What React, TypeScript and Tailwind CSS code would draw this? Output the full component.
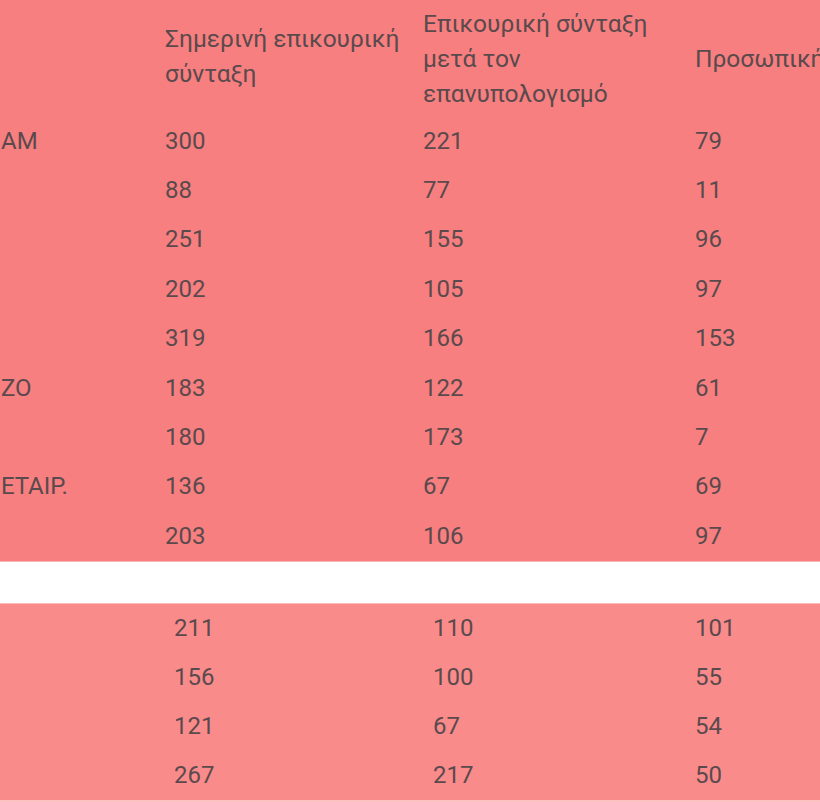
import React from "react";

const topRows = [
  ["ΑΜ", "300", "221", "79"],
  ["", "88", "77", "11"],
  ["", "251", "155", "96"],
  ["", "202", "105", "97"],
  ["", "319", "166", "153"],
  ["ΖΟ", "183", "122", "61"],
  ["", "180", "173", "7"],
  ["ΕΤΑΙΡ.", "136", "67", "69"],
  ["", "203", "106", "97"],
];

const bottomRows = [
  ["", "211", "110", "101"],
  ["", "156", "100", "55"],
  ["", "121", "67", "54"],
  ["", "267", "217", "50"],
];

function App() {
  return (
    <div
      className="w-[820px] h-[802px] overflow-hidden bg-white text-[#5a4a4d]"
      style={{ fontFamily: "Roboto, 'Noto Sans', sans-serif" }}
    >
      <div className="bg-[#f77f7f] border-b border-[#fbb4b4]">
        <div className="grid grid-cols-[165px_258px_272px_1fr] h-[116px] items-center text-[24.5px] leading-[35px] whitespace-nowrap">
          <div className="pl-[1px]"></div>
          <div className="-mt-[4px]">
            Σημερινή επικουρική
            <br />
            σύνταξη
          </div>
          <div>
            Επικουρική σύνταξη
            <br />
            μετά τον
            <br />
            επανυπολογισμό
          </div>
          <div className="overflow-hidden">Προσωπική διαφορά</div>
        </div>
        {topRows.map((r, i) => (
          <div
            key={i}
            className="grid grid-cols-[165px_258px_272px_1fr] h-[49.4px] items-center text-[24px]"
          >
            <div className="pl-[1px]">{r[0]}</div>
            <div>{r[1]}</div>
            <div>{r[2]}</div>
            <div>{r[3]}</div>
          </div>
        ))}
      </div>
      <div className="h-[41px] bg-white" />
      <div className="bg-[#fa8b8b] border-t border-[#fbb9b9] border-b-2 border-b-[#fcc2c2]">
        {bottomRows.map((r, i) => (
          <div
            key={i}
            className="grid grid-cols-[174px_259px_262px_1fr] h-[49px] items-center text-[24px]"
          >
            <div>{r[0]}</div>
            <div>{r[1]}</div>
            <div>{r[2]}</div>
            <div>{r[3]}</div>
          </div>
        ))}
      </div>
    </div>
  );
}

export default App;
